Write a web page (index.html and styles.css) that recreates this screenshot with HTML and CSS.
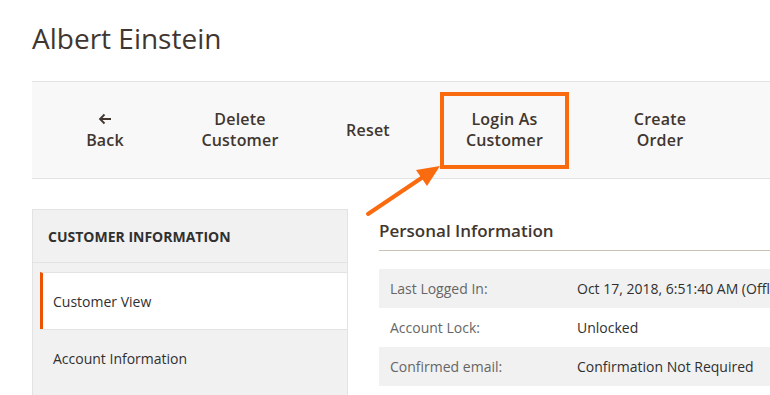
FILE: index.html
```html
<!DOCTYPE html>
<html lang="en">
<head>
  <meta charset="UTF-8" />
  <title>Albert Einstein - Customers</title>
  <link rel="stylesheet" href="styles.css">
</head>
<body>

  <div class="page">
    <h1 class="page-title">Albert Einstein</h1>

    <div class="page-actions">
      <button class="action action-back">
        <svg class="back-icon" width="14" height="12" viewBox="0 0 14 12">
          <path d="M13 6H2M6.5 1.5L2 6l4.5 4.5" fill="none" stroke="#41362f" stroke-width="1.8"/>
        </svg>
        <span>Back</span>
      </button>
      <button class="action action-delete">Delete<br>Customer</button>
      <button class="action action-reset">Reset</button>
      <div class="action-slot">
        <button class="action action-login">Login As<br>Customer</button>
      </div>
      <button class="action action-order">Create<br>Order</button>
    </div>

    <div class="columns">
      <div class="side-nav">
        <div class="side-nav-title">CUSTOMER INFORMATION</div>
        <div class="side-nav-items">
          <div class="side-nav-item active">Customer View</div>
          <div class="side-nav-item">Account Information</div>
        </div>
      </div>

      <div class="main-col">
        <h2 class="section-title">Personal Information</h2>
        <div class="table-wrap">
          <table class="info-table">
            <tr>
              <th>Last Logged In:</th>
              <td>Oct 17, 2018, 6:51:40 AM (Offline)</td>
            </tr>
            <tr>
              <th>Account Lock:</th>
              <td>Unlocked</td>
            </tr>
            <tr>
              <th>Confirmed email:</th>
              <td>Confirmation Not Required</td>
            </tr>
          </table>
        </div>
      </div>
    </div>

    <!-- annotation arrow pointing at the login button -->
    <svg class="callout-arrow" width="100" height="70" viewBox="360 160 100 70">
      <line x1="368" y1="214" x2="423" y2="177" stroke="#fa6a0f" stroke-width="4" stroke-linecap="round"/>
      <polygon points="440,166 427,186 416,170" fill="#fa6a0f"/>
    </svg>
  </div>

</body>
</html>
```

FILE: styles.css
```css
body {
  margin: 0;
  padding: 0;
  background: #fff;
  font-family: 'Open Sans', sans-serif;
  color: #303030;
  overflow: hidden;
}

.page {
  position: relative;
  padding-left: 32px;
  width: 900px;
}

.page-title {
  margin: 0;
  padding-top: 19px;
  height: 81px;
  box-sizing: border-box;
  font-size: 28px;
  font-weight: 400;
  line-height: 38px;
  color: #41362f;
}

.page-actions {
  display: flex;
  align-items: center;
  height: 98px;
  background: #f8f8f8;
  border-top: 1px solid #e3e3e3;
  border-bottom: 1px solid #e3e3e3;
  box-sizing: border-box;
}

.action {
  background: none;
  border: none;
  padding: 0;
  font-family: 'Open Sans', sans-serif;
  font-size: 16px;
  font-weight: 600;
  line-height: 21px;
  color: #41362f;
  letter-spacing: 0.2px;
  cursor: pointer;
}

.action-back {
  width: 146px;
  display: flex;
  flex-direction: column;
  align-items: center;
}

.back-icon {
  margin: 4px 0 5px;
}

.action-delete { width: 124px; }
.action-reset { width: 132px; }

.action-slot {
  width: 138px;
  display: flex;
  justify-content: flex-start;
  padding-left: 6px;
  box-sizing: border-box;
}

.action-login {
  width: 129px;
  height: 77px;
  border: 4px solid #fa6a0f;
  box-sizing: border-box;
}

.action-order { width: 176px; }

.columns {
  display: flex;
  gap: 31px;
  margin-top: 30px;
}

.side-nav {
  width: 316px;
  background: #f1f1f1;
  border: 1px solid #e3e3e3;
  border-bottom: none;
  box-sizing: border-box;
  height: 190px;
}

.side-nav-title {
  height: 53px;
  padding-left: 15px;
  display: flex;
  align-items: center;
  font-size: 14px;
  font-weight: 700;
  color: #303030;
  border-bottom: 1px solid #e3e3e3;
  box-sizing: border-box;
}

.side-nav-items {
  padding: 9px 0 0 7px;
}

.side-nav-item {
  height: 57px;
  padding-left: 13px;
  display: flex;
  align-items: center;
  font-size: 14px;
  color: #303030;
  border-top: 1px solid #e3e3e3;
  box-sizing: border-box;
}

.side-nav-item.active {
  background: #fff;
  border-left: 3px solid #eb5202;
  padding-left: 10px;
}

.main-col {
  flex: 1;
}

.section-title {
  margin: 0;
  height: 42px;
  padding-top: 10px;
  box-sizing: border-box;
  font-size: 17px;
  font-weight: 600;
  line-height: 24px;
  color: #41362f;
  border-bottom: 1px solid #cac3b4;
}

.table-wrap {
  width: 391px;
  overflow: hidden;
}

.info-table {
  margin-top: 18px;
  width: 420px;
  border-collapse: collapse;
  font-size: 14px;
}

.info-table tr {
  height: 39px;
}

.info-table tr:nth-child(odd) {
  background: #f1f1f1;
}

.info-table th {
  width: 187px;
  padding: 0 0 0 11px;
  text-align: left;
  font-weight: 400;
  color: #666;
}

.info-table td {
  padding: 0;
  color: #303030;
  white-space: nowrap;
}

.callout-arrow {
  position: absolute;
  left: 360px;
  top: 160px;
}
```
